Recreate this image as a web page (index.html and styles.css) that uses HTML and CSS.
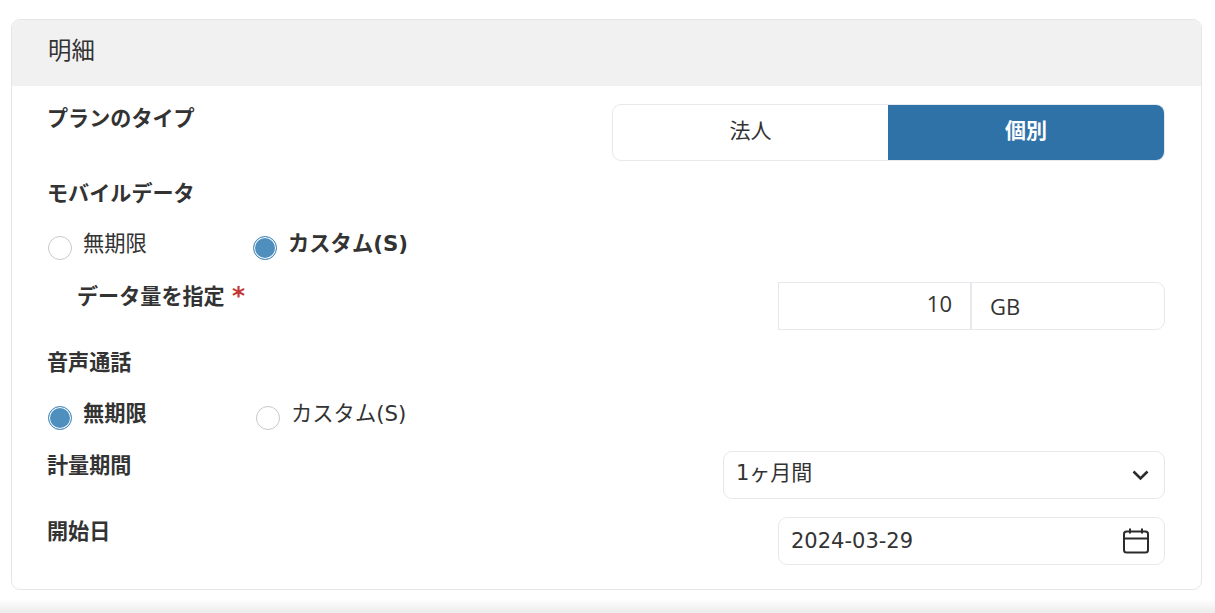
FILE: index.html
```html
<!DOCTYPE html>
<html lang="ja">
<head>
  <meta charset="UTF-8" />
  <title>明細</title>
  <link rel="stylesheet" href="styles.css">
</head>
<body>

  <div class="card">
    <div class="card-head">明細</div>
    <div class="card-body">

      <div class="row row-plan">
        <div class="label">プランのタイプ</div>
        <div class="toggle">
          <div class="toggle-item">法人</div>
          <div class="toggle-item active">個別</div>
        </div>
      </div>

      <div class="label row-mobile">モバイルデータ</div>

      <div class="radios radios-mobile">
        <div class="radio radio-a"><span class="dot"></span><span>無期限</span></div>
        <div class="radio checked"><span class="dot"></span><span>カスタム(S)</span></div>
      </div>

      <div class="row row-data">
        <div class="label label-sub">データ量を指定 <span class="req">*</span></div>
        <div class="field field-data">
          <div class="data-num">10</div>
          <div class="data-unit">GB</div>
        </div>
      </div>

      <div class="label row-voice">音声通話</div>

      <div class="radios radios-voice">
        <div class="radio radio-a checked"><span class="dot"></span><span>無期限</span></div>
        <div class="radio"><span class="dot"></span><span>カスタム(S)</span></div>
      </div>

      <div class="row row-period">
        <div class="label">計量期間</div>
        <div class="field field-select">
          <span class="field-text">1ヶ月間</span>
          <svg width="17" height="11" viewBox="0 0 17 11"><path d="M1.5 1.5 8.5 8.5l7-7" fill="none" stroke="#2b2b2b" stroke-width="2.6"/></svg>
        </div>
      </div>

      <div class="row row-date">
        <div class="label">開始日</div>
        <div class="field field-date">
          <span class="field-text">2024-03-29</span>
          <svg width="26" height="26" viewBox="0 0 26 26" fill="none" stroke="#2b2b2b" stroke-width="2">
            <rect x="1" y="3.5" width="24" height="21" rx="2.5"/>
            <path d="M1 10.5h24M7 0.5v5M19 0.5v5"/>
          </svg>
        </div>
      </div>

    </div>
  </div>

  <div class="page-foot"></div>

</body>
</html>
```

FILE: styles.css
```css
* { margin: 0; padding: 0; box-sizing: border-box; }

body {
  font-family: "DejaVu Sans", "Noto Sans CJK JP", sans-serif;
  font-size: 21px;
  color: #333;
  background-color: #fff;
  height: 613px;
  overflow: hidden;
  padding: 19px 13px 0 11px;
}

.card {
  height: 571px;
  border: 1px solid #e6e6e6;
  border-radius: 9px;
  overflow: hidden;
}

.card-head {
  height: 66px;
  background-color: #f1f1f1;
  padding: 0 36px;
  font-size: 23.4px;
  line-height: 62px;
}

.card-body {
  padding: 18px 36px 0 35px;
}

.row {
  display: flex;
  justify-content: space-between;
  align-items: flex-start;
}

.label {
  height: 28px;
  font-size: 21.1px;
  font-weight: 700;
  line-height: 30px;
}

/* rows */
.row-mobile { margin-top: 18px; }
.radios-mobile { margin-top: 23px; }
.row-data { margin-top: 24px; }
.row-voice { margin-top: 18px; }
.radios-voice { margin-top: 24px; }
.row-period { margin-top: 23px; }
.row-date { margin-top: 18px; }

.label-sub { padding-left: 30px; }
.req { color: #c23934; font-size: 25px; line-height: 20px; }

.toggle {
  display: flex;
  width: 553px;
  height: 57px;
  border: 1px solid #e6e8ec;
  border-radius: 9px;
  overflow: hidden;
  font-size: 21px;
}

.toggle-item {
  flex: 1;
  text-align: center;
  line-height: 52px;
}

.toggle-item.active {
  flex: none;
  width: 276px;
  background-color: #2f72a8;
  color: #fff;
  font-weight: 700;
}

.radios {
  display: flex;
  height: 28px;
  padding-left: 1px;
  font-size: 21.3px;
}

.radio {
  display: flex;
  gap: 11px;
  line-height: 28px;
}

.radio-a { width: 208px; }
.radios-mobile .radio-a { width: 205px; }

.dot {
  width: 24px;
  height: 24px;
  margin-top: 6px;
  border: 1px solid #c8c8c8;
  border-radius: 50%;
  background-color: #fff;
}

.radio.checked { font-weight: 700; }
.radio.checked .dot {
  background-color: #4f8fbe;
  border-color: #4f8fbe;
  box-shadow: inset 0 0 0 1px #fff;
}

.field {
  display: flex;
  align-items: center;
  justify-content: space-between;
  height: 48px;
  border: 1px solid #e6e8ec;
  border-radius: 9px;
  font-size: 21px;
}

.field-select .field-text { padding-bottom: 8px; }

.field-data {
  width: 387px;
  border-radius: 0 9px 9px 0;
  font-family: "Open Sans", sans-serif;
  font-size: 22px;
}

.data-num {
  width: 193px;
  height: 100%;
  padding-right: 18px;
  text-align: right;
  line-height: 41px;
  border-right: 2px solid #e6e8ec;
}

.data-unit {
  flex: 1;
  padding-left: 18px;
  line-height: 39px;
}

.field-select { width: 442px; padding: 0 15px 0 12px; }
.field-date { width: 387px; padding: 0 15px 0 12px; }

.page-foot {
  position: fixed;
  left: 0;
  right: 0;
  bottom: 0;
  height: 14px;
  background: linear-gradient(#fff, #ececec);
}
```
